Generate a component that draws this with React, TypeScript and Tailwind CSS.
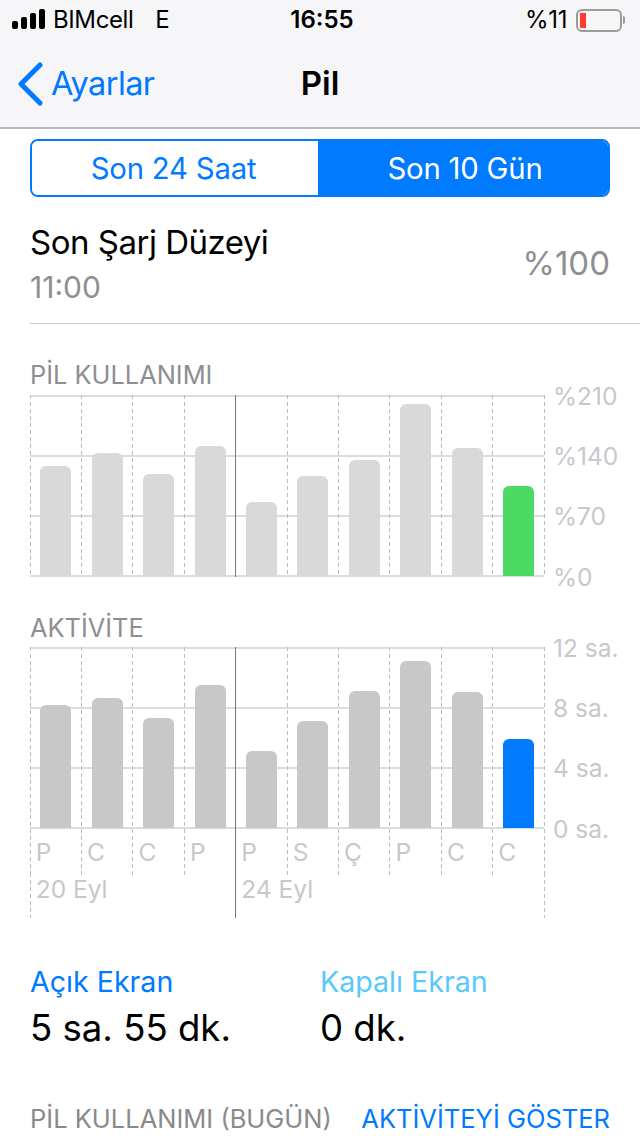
const dashV =
  "bg-[repeating-linear-gradient(to_bottom,#bdbdbd_0,#bdbdbd_4px,transparent_4px,transparent_7px)]";

const days = ["P", "C", "C", "P", "P", "S", "Ç", "P", "C", "C"];

const usage = [110, 123, 102, 130, 74, 100, 116, 172, 128, 90];
const activity = [123, 130, 110, 143, 77, 107, 137, 167, 136, 89];

function StatusBar() {
  return (
    <div className="flex items-center h-10 pl-3 pr-[15px] text-[24px] text-black relative">
      <svg width="34" height="22" viewBox="0 0 34 22" className="mr-[7px] -mt-[1px] fill-black">
        <rect x="0" y="12" width="6" height="8" rx="2" />
        <rect x="9" y="8" width="6" height="12" rx="2" />
        <rect x="18" y="4" width="6" height="16" rx="2" />
        <rect x="27" y="0" width="6" height="20" rx="2" />
      </svg>
      <span className="tracking-[-0.4px]">BIMcell</span>
      <span className="ml-[22px]">E</span>
      <span className="absolute left-0 right-0 text-center font-semibold pl-[4px]">16:55</span>
      <span className="ml-auto tracking-[-0.4px]">%11</span>
      <div className="ml-[9px] w-[46px] h-[23px] rounded-[6px] border-2 border-[#9b9b9b] p-[2px]">
        <div className="w-[6px] h-full bg-[#ff3b30]" />
      </div>
      <div className="ml-[1px] w-[2px] h-[8px] bg-[#9b9b9b] rounded-r-sm" />
    </div>
  );
}

function NavBar() {
  return (
    <div className="flex items-center h-[88px] pl-[16px] relative">
      <svg width="28" height="44" viewBox="0 0 28 44" fill="none">
        <path d="M24 3 L5 22 L24 41" stroke="#007aff" strokeWidth="5" strokeLinecap="round" strokeLinejoin="round" />
      </svg>
      <span className="ml-[7px] text-[#007aff] text-[32.5px] tracking-[-0.6px]">Ayarlar</span>
      <span className="absolute left-0 right-0 text-center text-[33px] font-semibold text-black">Pil</span>
    </div>
  );
}

function Segmented() {
  return (
    <div className="mx-[30px] mt-[10px] flex h-[58px] rounded-lg border-2 border-[#007aff] overflow-hidden text-[29.3px] tracking-[-0.2px]">
      <div className="w-[286px] flex items-center justify-center pt-[1px] pr-[3px] text-[#007aff] bg-white">Son 24 Saat</div>
      <div className="flex-1 flex items-center justify-center pt-[1px] pl-[4px] text-white bg-[#007aff]">Son 10 Gün</div>
    </div>
  );
}

function Chart({ values, barColor, lastColor, labels }: { values: number[]; barColor: string; lastColor: string; labels: string[] }) {
  return (
    <div className="flex ml-[29.7px] h-[182px]">
      <div className="relative w-[514px] h-[182px]">
        {/* yatay cizgiler */}
        <div className="absolute inset-0 flex flex-col justify-between">
          <div className="h-[2px] bg-[#dcdcdc]" />
          <div className="h-[2px] bg-[#dcdcdc]" />
          <div className="h-[2px] bg-[#dcdcdc]" />
          <div className="h-[2px] bg-[#dcdcdc]" />
        </div>
        <div className="absolute inset-0 grid grid-cols-10">
          {values.map((v, i) => (
            <div key={i} className="relative flex items-end justify-center pb-[1px] pl-[1px]">
              <div className={`absolute left-0 top-0 bottom-0 w-px ${i === 4 ? "bg-[#767676]" : dashV}`} />
              <div
                className="relative w-[31px] rounded-t-[6px]"
                style={{ height: v, background: i === 9 ? lastColor : barColor }}
              />
              {i === 9 && <div className={`absolute -right-px top-0 bottom-0 w-px ${dashV}`} />}
            </div>
          ))}
        </div>
      </div>
      <div className="ml-[9.3px] pt-[1px] flex flex-col justify-between h-[182px] text-[24.5px] text-[#c7c7cc]">
        {labels.map((l) => (
          <div key={l} className="h-0 flex items-center whitespace-nowrap">{l}</div>
        ))}
      </div>
    </div>
  );
}

function DayRow() {
  return (
    <div className="ml-[29.7px] w-[514px] h-[89px]">
      <div className="grid grid-cols-10 h-[44px]">
        {days.map((d, i) => (
          <div key={i} className="relative pl-[6px] text-[24.5px] leading-[46px] text-[#c7c7cc]">
            <div className={`absolute left-0 top-0 bottom-0 w-px ${i === 4 ? "bg-[#767676]" : dashV}`} />
            {d}
            {i === 9 && <div className={`absolute -right-px top-0 bottom-0 w-px ${dashV}`} />}
          </div>
        ))}
      </div>
      <div className="grid grid-cols-10 h-[45px]">
        <div className="col-span-4 relative pl-[6px] text-[24.5px] leading-[32px] text-[#c7c7cc]">
          <div className={`absolute left-0 top-0 bottom-0 w-px ${dashV}`} />
          20 Eyl
        </div>
        <div className="col-span-6 relative pl-[6px] text-[24.5px] leading-[32px] text-[#c7c7cc]">
          <div className="absolute left-0 top-0 bottom-0 w-px bg-[#767676]" />
          24 Eyl
          <div className={`absolute -right-px top-0 bottom-0 w-px ${dashV}`} />
        </div>
      </div>
    </div>
  );
}

export default function App() {
  return (
    <div className="w-[640px] h-[1136px] overflow-hidden bg-white font-['Inter','Liberation_Sans',sans-serif]">
      <div className="bg-[#f6f6f8] border-b-2 border-[#b8b8b8] h-[129px]">
        <StatusBar />
        <NavBar />
      </div>

      <Segmented />

      <div className="ml-[30px] border-b border-[#c8c8c8] h-[127px] flex pr-[30px]">
        <div className="pt-[21px]">
          <div className="text-[33px] leading-[48px] text-black tracking-[-0.5px]">Son Şarj Düzeyi</div>
          <div className="text-[30px] leading-[42px] text-[#8e8e93]">11:00</div>
        </div>
        <div className="ml-auto pt-[42px] text-[33px] leading-[48px] text-[#8e8e93]">%100</div>
      </div>

      <div className="ml-[30px] mt-[33px] h-[38px] text-[25.4px] leading-[36px] text-[#8e8e93]">PİL KULLANIMI</div>
      <Chart values={usage} barColor="#d9d9d9" lastColor="#4cd964" labels={["%210", "%140", "%70", "%0"]} />

      <div className="ml-[30px] mt-[33px] h-[37px] text-[25.4px] leading-[36px] text-[#8e8e93]">AKTİVİTE</div>
      <Chart values={activity} barColor="#c8c8c8" lastColor="#007aff" labels={["12 sa.", "8 sa.", "4 sa.", "0 sa."]} />
      <DayRow />

      <div className="flex ml-[30px] mt-[43px]">
        <div className="w-[290px]">
          <div className="text-[28.6px] leading-[42px] text-[#007aff]">Açık Ekran</div>
          <div className="text-[36.6px] leading-[50px] text-black">5 sa. 55 dk.</div>
        </div>
        <div>
          <div className="text-[28.6px] leading-[42px] text-[#5ac8fa]">Kapalı Ekran</div>
          <div className="text-[36.6px] leading-[50px] text-black">0 dk.</div>
        </div>
      </div>

      <div className="flex justify-between ml-[30px] mr-[30px] mt-[46px] text-[25.5px] leading-[40px] whitespace-nowrap">
        <span className="text-[#8a8a8a]">PİL KULLANIMI (BUGÜN)</span>
        <span className="text-[#007aff]">AKTİVİTEYİ GÖSTER</span>
      </div>
    </div>
  );
}
